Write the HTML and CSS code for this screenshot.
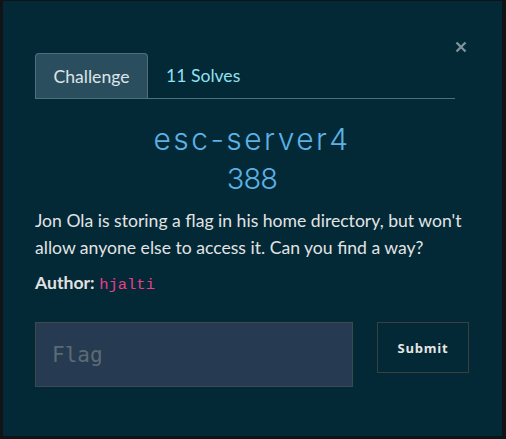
FILE: index.html
```html
<!DOCTYPE html>
<html>
<head>
<meta charset="utf-8">
<link rel="stylesheet" href="styles.css">
</head>
<body>
<div class="modal">
  <button class="close" aria-label="Close">
    <svg width="12" height="12" viewBox="0 0 12 12"><path d="M1.5 1.5 L10.5 10.5 M10.5 1.5 L1.5 10.5" stroke="#7d929b" stroke-width="2.4" stroke-linecap="butt"/></svg>
  </button>
  <div class="tabs">
    <div class="tab active">Challenge</div>
    <div class="tab">11 Solves</div>
  </div>
  <h2 class="title">esc-server4</h2>
  <div class="points">388</div>
  <p class="desc">Jon Ola is storing a flag in his home directory, but won't allow anyone else to access it. Can you find a way?</p>
  <p class="author"><b>Author:</b> <code>hjalti</code></p>
  <form class="submit-row">
    <input class="flag" type="text" placeholder="Flag">
    <button class="submit" type="button">Submit</button>
  </form>
</div>
</body>
</html>
```
FILE: styles.css
```css
html, body {
  margin: 0;
  padding: 0;
  background: #111416;
  width: 506px;
  height: 439px;
  overflow: hidden;
}
.modal {
  position: relative;
  box-sizing: border-box;
  margin: 1px 0 0 3px;
  width: 499px;
  height: 435px;
  background: #032836;
  padding: 52px 33px 0 32px;
  font-family: "Lato", sans-serif;
  color: #e0e0e0;
}
.close {
  position: absolute;
  top: 40px;
  right: 35px;
  background: none;
  border: 0;
  padding: 0;
  width: 12px;
  height: 12px;
  display: flex;
}
.tabs {
  display: flex;
  border-bottom: 1px solid #4d6f7e;
  height: 45px;
  margin-right: 14px;
}
.tab {
  box-sizing: border-box;
  height: 45px;
  padding: 0 18px;
  display: flex;
  align-items: center;
  font-size: 17.6px;
  color: #8fe2f0;
}
.tab.active {
  background: #2b4e5e;
  border: 1px solid #4d6f7e;
  border-bottom: 0;
  border-radius: 4px 4px 0 0;
  color: #dde5e8;
  padding: 0;
  width: 113px;
  justify-content: center;
}
.title {
  margin: 22px 0 0;
  text-align: center;
  font-family: "Inter", sans-serif;
  font-weight: 300;
  font-size: 30px;
  letter-spacing: 2.4px;
  line-height: 36px;
  color: #5db1e3;
}
.points {
  margin-top: 4px;
  text-align: center;
  font-family: "Inter", sans-serif;
  font-weight: 300;
  font-size: 29px;
  letter-spacing: -0.8px;
  line-height: 36px;
  color: #5db1e3;
}
.desc {
  margin: 10px 0 0;
  font-size: 17.6px;
  line-height: 27px;
  color: #e2e4e4;
}
.author {
  margin: 8px 0 0;
  font-size: 17.6px;
  line-height: 27px;
}
.author b {
  font-weight: 700;
}
.author code {
  font-family: "Liberation Mono", monospace;
  font-size: 15.5px;
  color: #e83e8c;
}
.submit-row {
  display: flex;
  align-items: flex-start;
  gap: 24px;
  margin-top: 23px;
}
.flag {
  box-sizing: border-box;
  width: 318px;
  height: 65px;
  flex: none;
  background: #263b52;
  border: 1px solid #3c4a4e;
  padding: 0 16px;
  font-family: "DejaVu Sans Mono", monospace;
  font-size: 21px;
  color: #ddd;
  outline: none;
}
.flag::placeholder {
  color: #5c6b73;
}
.submit {
  box-sizing: border-box;
  width: 92px;
  height: 51px;
  flex: none;
  background: transparent;
  border: 1px solid #3a3f40;
  color: #e6e6e6;
  font-family: "Open Sans", sans-serif;
  font-weight: 700;
  font-size: 13px;
  letter-spacing: 0.8px;
}
```
